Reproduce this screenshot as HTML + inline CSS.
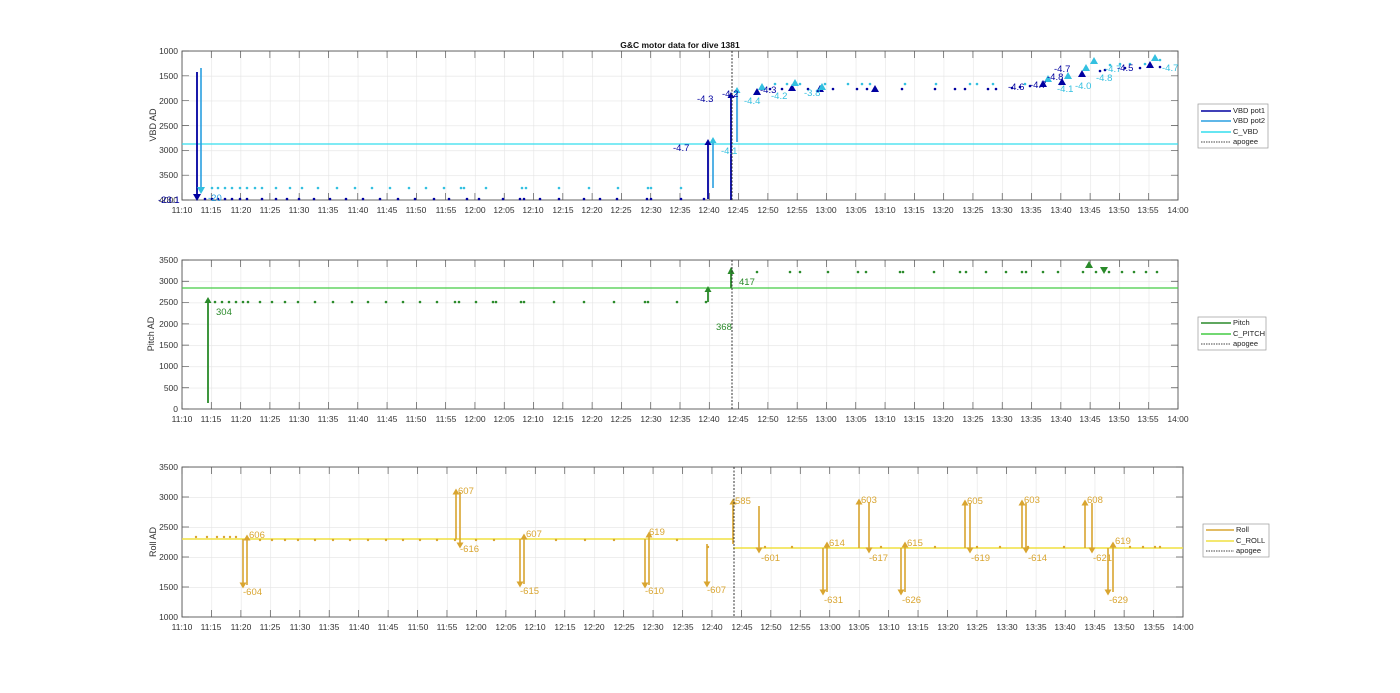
<!DOCTYPE html>
<html><head><meta charset="utf-8"><style>
html,body{margin:0;padding:0;background:#fff;}
svg{display:block;font-family:"Liberation Sans",Arial,sans-serif;}
.t{font-size:8.5px;fill:#333;}
.yl{font-size:9px;fill:#333;}
.lg{font-size:7.5px;fill:#222;}
</style></head><body>
<svg width="1400" height="693" viewBox="0 0 1400 693" xmlns="http://www.w3.org/2000/svg">
<defs>
<pattern id="g1" x="182" y="51" width="29.294" height="24.833" patternUnits="userSpaceOnUse"><path d="M0 0V24.833M0 0H29.294" stroke="#e4e4e4" stroke-width="1.2" fill="none"/></pattern>
<pattern id="g2" x="182" y="260" width="29.294" height="21.286" patternUnits="userSpaceOnUse"><path d="M0 0V21.286M0 0H29.294" stroke="#e4e4e4" stroke-width="1.2" fill="none"/></pattern>
<pattern id="g3" x="182" y="467" width="29.441" height="30" patternUnits="userSpaceOnUse"><path d="M0 0V30M0 0H29.441" stroke="#e4e4e4" stroke-width="1.2" fill="none"/></pattern>
</defs>
<rect width="1400" height="693" fill="#fff"/>
<!-- grids -->
<rect x="182" y="51" width="996" height="149" fill="url(#g1)"/>
<rect x="182" y="260" width="996" height="149" fill="url(#g2)"/>
<rect x="182" y="467" width="1001" height="150" fill="url(#g3)"/>
<!-- ticks -->
<g stroke="#555" stroke-width="7" fill="none">
<path d="M181.65 54.5H1179" stroke-dasharray="0.7 28.594"/>
<path d="M181.65 196.5H1179" stroke-dasharray="0.7 28.594"/>
<path d="M185.5 50.65V201" stroke-dasharray="0.7 24.133"/>
<path d="M1174.5 50.65V201" stroke-dasharray="0.7 24.133"/>
<path d="M181.65 263.5H1179" stroke-dasharray="0.7 28.594"/>
<path d="M181.65 405.5H1179" stroke-dasharray="0.7 28.594"/>
<path d="M185.5 259.65V410" stroke-dasharray="0.7 20.586"/>
<path d="M1174.5 259.65V410" stroke-dasharray="0.7 20.586"/>
<path d="M181.65 470.5H1184" stroke-dasharray="0.7 28.741"/>
<path d="M181.65 613.5H1184" stroke-dasharray="0.7 28.741"/>
<path d="M185.5 466.65V618" stroke-dasharray="0.7 29.3"/>
<path d="M1179.5 466.65V618" stroke-dasharray="0.7 29.3"/>
</g>
<g fill="none" stroke="#555" stroke-width="0.9">
<rect x="182" y="51" width="996" height="149"/>
<rect x="182" y="260" width="996" height="149"/>
<rect x="182" y="467" width="1001" height="150"/>
</g>

<!-- PLOT 1 data -->
<line x1="182" y1="144" x2="1178" y2="144" stroke="#33ddee" stroke-width="1.3"/>
<path fill="none" stroke="#33c0e0" stroke-width="2.6" stroke-linecap="round" d="M212 188h0M218 188h0M225 188h0M232 188h0M240 188h0M247 188h0M255 188h0M262 188h0M276 188h0M290 188h0M302 188h0M318 188h0M337 188h0M355 188h0M372 188h0M390 188h0M409 188h0M426 188h0M444 188h0M461 188h0M464 188h0M486 188h0M522 188h0M526 188h0M559 188h0M589 188h0M618 188h0M648 188h0M651 188h0M681 188h0M775 84h0M787 84h0M800 84h0M825 84h0M848 84h0M862 84h0M870 84h0M905 84h0M936 84h0M970 84h0M977 84h0M993 84h0M1025 84h0M1060 84h0M1110 65h0M1120 64h0M1130 64h0M1145 64h0M1160 60h0"/>
<path fill="none" stroke="#0000a0" stroke-width="2.6" stroke-linecap="round" d="M205 199h0M212 199h0M218 199h0M225 199h0M232 199h0M240 199h0M247 199h0M262 199h0M276 199h0M287 199h0M299 199h0M314 199h0M330 199h0M346 199h0M363 199h0M380 199h0M398 199h0M415 199h0M434 199h0M449 199h0M467 199h0M479 199h0M503 199h0M520 199h0M524 199h0M540 199h0M559 199h0M584 199h0M600 199h0M617 199h0M647 199h0M651 199h0M681 199h0M704 199h0M770 89h0M782 89h0M808 89h0M833 89h0M857 89h0M867 89h0M902 89h0M935 89h0M955 89h0M965 89h0M988 89h0M996 89h0M1012 88h0M1020 87h0M1030 86h0M1100 71h0M1105 70h0M1125 68h0M1140 68h0M1160 67h0"/>
<path fill="none" stroke="#0000a0" stroke-width="1.8" d="M197 72V197M708 199V145M731 200V98"/>
<path fill="none" stroke="#2a9fe0" stroke-width="1.6" d="M201 68V190M713 188V143M737 142V93"/>
<g fill="#0000a0">
<polygon points="197,201 193,194 201,194"/>
<polygon points="708,139 704.5,145 711.5,145"/>
<polygon points="731,92 727.5,98 734.5,98"/>
<polygon points="757,88 753,95 761,95"/><polygon points="792,84 788,91 796,91"/><polygon points="820,85 816,92 824,92"/><polygon points="875,85 871,92 879,92"/><polygon points="1043,80 1039,87 1047,87"/><polygon points="1062,78 1058,85 1066,85"/><polygon points="1082,70 1078,77 1086,77"/><polygon points="1150,61 1146,68 1154,68"/>
</g>
<g fill="#33c0e0">
<polygon points="201,194 197,187 205,187"/>
<polygon points="713,137 709.5,143 716.5,143"/>
<polygon points="737,87 733.5,93 740.5,93"/>
<polygon points="762,83 758,90 766,90"/><polygon points="795,79 791,86 799,86"/><polygon points="822,83 818,90 826,90"/><polygon points="1048,75 1044,82 1052,82"/><polygon points="1068,72 1064,79 1072,79"/><polygon points="1086,64 1082,71 1090,71"/><polygon points="1094,57 1090,64 1098,64"/><polygon points="1155,54 1151,61 1159,61"/>
</g>
<line x1="732" y1="51" x2="732" y2="200" stroke="#333" stroke-width="1" stroke-dasharray="2,1.5"/>

<!-- PLOT 2 data -->
<line x1="182" y1="288" x2="1178" y2="288" stroke="#44cc44" stroke-width="1.3"/>
<path fill="none" stroke="#2a8a2a" stroke-width="2.6" stroke-linecap="round" d="M215 302h0M222 302h0M229 302h0M236 302h0M243 302h0M248 302h0M260 302h0M272 302h0M285 302h0M298 302h0M315 302h0M333 302h0M352 302h0M368 302h0M386 302h0M403 302h0M420 302h0M437 302h0M455 302h0M459 302h0M476 302h0M493 302h0M496 302h0M521 302h0M524 302h0M554 302h0M584 302h0M614 302h0M645 302h0M648 302h0M677 302h0M706 302h0M757 272h0M790 272h0M800 272h0M828 272h0M858 272h0M866 272h0M900 272h0M903 272h0M934 272h0M960 272h0M966 272h0M986 272h0M1006 272h0M1022 272h0M1026 272h0M1043 272h0M1058 272h0M1083 272h0M1096 272h0M1109 272h0M1122 272h0M1134 272h0M1146 272h0M1157 272h0"/>
<path fill="none" stroke="#2a8a2a" stroke-width="1.8" d="M208 403V302M708 302V291M731 288V272"/>
<g fill="#2a8a2a">
<polygon points="208,297 204.5,303 211.5,303"/><polygon points="708,286 704.5,292 711.5,292"/><polygon points="731,267 727.5,274 734.5,274"/>
<polygon points="1089,261 1085,268 1093,268"/><polygon points="1104,274 1100,267 1108,267"/>
</g>
<line x1="732" y1="260" x2="732" y2="409" stroke="#333" stroke-width="1" stroke-dasharray="2,1.5"/>

<!-- PLOT 3 data -->
<path fill="none" stroke="#f0e040" stroke-width="1.5" d="M182 539H733M733 548H1183"/>
<path fill="none" stroke="#d9a530" stroke-width="2.4" stroke-linecap="round" d="M196 537h0M207 537h0M217 537h0M224 537h0M230 537h0M236 537h0M260 540h0M272 540h0M285 540h0M298 540h0M315 540h0M333 540h0M350 540h0M368 540h0M386 540h0M403 540h0M420 540h0M437 540h0M455 540h0M476 540h0M494 540h0M556 540h0M585 540h0M614 540h0M677 540h0M708 547h0M765 547h0M792 547h0M826 547h0M881 547h0M935 547h0M977 547h0M1000 547h0M1028 547h0M1064 547h0M1130 547h0M1143 547h0M1155 547h0M1160 547h0"/>
<path fill="none" stroke="#d9a530" stroke-width="1.6" d="M243 539V584M247 585V539M456 539V493M460 492V544M520 539V583M524 584V538M645 539V584M649 585V536M707 544V583M733 544V503M759 506V549M823 548V591M827 592V546M859 548V503M869 502V549M901 548V591M905 592V546M965 548V504M970 503V549M1022 548V504M1026 503V549M1085 548V504M1092 503V549M1108 548V591M1113 592V546"/>
<g fill="#d9a530">
<polygon points="243,588.5 239.5,582.5 246.5,582.5"/><polygon points="247,534.5 243.5,540.5 250.5,540.5"/>
<polygon points="456,488.5 452.5,494.5 459.5,494.5"/><polygon points="460,548.5 456.5,542.5 463.5,542.5"/>
<polygon points="520,587.5 516.5,581.5 523.5,581.5"/><polygon points="524,533.5 520.5,539.5 527.5,539.5"/>
<polygon points="645,588.5 641.5,582.5 648.5,582.5"/><polygon points="649,531.5 645.5,537.5 652.5,537.5"/>
<polygon points="707,587.5 703.5,581.5 710.5,581.5"/><polygon points="733,498.5 729.5,504.5 736.5,504.5"/>
<polygon points="759,553.5 755.5,547.5 762.5,547.5"/><polygon points="823,595.5 819.5,589.5 826.5,589.5"/>
<polygon points="827,541.5 823.5,547.5 830.5,547.5"/><polygon points="859,498.5 855.5,504.5 862.5,504.5"/>
<polygon points="869,553.5 865.5,547.5 872.5,547.5"/><polygon points="901,595.5 897.5,589.5 904.5,589.5"/>
<polygon points="905,541.5 901.5,547.5 908.5,547.5"/><polygon points="965,499.5 961.5,505.5 968.5,505.5"/>
<polygon points="970,553.5 966.5,547.5 973.5,547.5"/><polygon points="1022,499.5 1018.5,505.5 1025.5,505.5"/>
<polygon points="1026,553.5 1022.5,547.5 1029.5,547.5"/><polygon points="1085,499.5 1081.5,505.5 1088.5,505.5"/>
<polygon points="1092,553.5 1088.5,547.5 1095.5,547.5"/><polygon points="1108,595.5 1104.5,589.5 1111.5,589.5"/>
<polygon points="1113,541.5 1109.5,547.5 1116.5,547.5"/>
</g>
<line x1="734" y1="467" x2="734" y2="617" stroke="#333" stroke-width="1" stroke-dasharray="2,1.5"/>

<!-- title -->
<text x="680" y="48" text-anchor="middle" font-size="8.5" font-weight="bold" fill="#111">G&amp;C motor data for dive 1381</text>
<text class="yl" transform="translate(156,125) rotate(-90)" text-anchor="middle">VBD AD</text>
<text class="yl" transform="translate(154,334) rotate(-90)" text-anchor="middle">Pitch AD</text>
<text class="yl" transform="translate(156,542) rotate(-90)" text-anchor="middle">Roll AD</text>
<g class="t" text-anchor="end">
<text x="178" y="54">1000</text><text x="178" y="79">1500</text><text x="178" y="104">2000</text><text x="178" y="129">2500</text><text x="178" y="153">3000</text><text x="178" y="178">3500</text><text x="178" y="203">4000</text>
<text x="178" y="263">3500</text><text x="178" y="284">3000</text><text x="178" y="305">2500</text><text x="178" y="327">2000</text><text x="178" y="348">1500</text><text x="178" y="369">1000</text><text x="178" y="391">500</text><text x="178" y="412">0</text>
<text x="178" y="470">3500</text><text x="178" y="500">3000</text><text x="178" y="530">2500</text><text x="178" y="560">2000</text><text x="178" y="590">1500</text><text x="178" y="620">1000</text>
</g>
<g class="t" text-anchor="middle">
<text x="182" y="213">11:10</text><text x="211" y="213">11:15</text><text x="241" y="213">11:20</text><text x="270" y="213">11:25</text><text x="299" y="213">11:30</text><text x="328" y="213">11:35</text><text x="358" y="213">11:40</text><text x="387" y="213">11:45</text><text x="416" y="213">11:50</text><text x="446" y="213">11:55</text><text x="475" y="213">12:00</text><text x="504" y="213">12:05</text><text x="533" y="213">12:10</text><text x="563" y="213">12:15</text><text x="592" y="213">12:20</text><text x="621" y="213">12:25</text><text x="651" y="213">12:30</text><text x="680" y="213">12:35</text><text x="709" y="213">12:40</text><text x="738" y="213">12:45</text><text x="768" y="213">12:50</text><text x="797" y="213">12:55</text><text x="826" y="213">13:00</text><text x="856" y="213">13:05</text><text x="885" y="213">13:10</text><text x="914" y="213">13:15</text><text x="943" y="213">13:20</text><text x="973" y="213">13:25</text><text x="1002" y="213">13:30</text><text x="1031" y="213">13:35</text><text x="1061" y="213">13:40</text><text x="1090" y="213">13:45</text><text x="1119" y="213">13:50</text><text x="1148" y="213">13:55</text><text x="1178" y="213">14:00</text>
</g>
<g class="t" text-anchor="middle" transform="translate(0,209)">
<text x="182" y="213">11:10</text><text x="211" y="213">11:15</text><text x="241" y="213">11:20</text><text x="270" y="213">11:25</text><text x="299" y="213">11:30</text><text x="328" y="213">11:35</text><text x="358" y="213">11:40</text><text x="387" y="213">11:45</text><text x="416" y="213">11:50</text><text x="446" y="213">11:55</text><text x="475" y="213">12:00</text><text x="504" y="213">12:05</text><text x="533" y="213">12:10</text><text x="563" y="213">12:15</text><text x="592" y="213">12:20</text><text x="621" y="213">12:25</text><text x="651" y="213">12:30</text><text x="680" y="213">12:35</text><text x="709" y="213">12:40</text><text x="738" y="213">12:45</text><text x="768" y="213">12:50</text><text x="797" y="213">12:55</text><text x="826" y="213">13:00</text><text x="856" y="213">13:05</text><text x="885" y="213">13:10</text><text x="914" y="213">13:15</text><text x="943" y="213">13:20</text><text x="973" y="213">13:25</text><text x="1002" y="213">13:30</text><text x="1031" y="213">13:35</text><text x="1061" y="213">13:40</text><text x="1090" y="213">13:45</text><text x="1119" y="213">13:50</text><text x="1148" y="213">13:55</text><text x="1178" y="213">14:00</text>
</g>
<g class="t" text-anchor="middle">
<text x="182" y="630">11:10</text><text x="211" y="630">11:15</text><text x="241" y="630">11:20</text><text x="270" y="630">11:25</text><text x="300" y="630">11:30</text><text x="329" y="630">11:35</text><text x="359" y="630">11:40</text><text x="388" y="630">11:45</text><text x="418" y="630">11:50</text><text x="447" y="630">11:55</text><text x="476" y="630">12:00</text><text x="506" y="630">12:05</text><text x="535" y="630">12:10</text><text x="565" y="630">12:15</text><text x="594" y="630">12:20</text><text x="624" y="630">12:25</text><text x="653" y="630">12:30</text><text x="683" y="630">12:35</text><text x="712" y="630">12:40</text><text x="742" y="630">12:45</text><text x="771" y="630">12:50</text><text x="800" y="630">12:55</text><text x="830" y="630">13:00</text><text x="859" y="630">13:05</text><text x="889" y="630">13:10</text><text x="918" y="630">13:15</text><text x="948" y="630">13:20</text><text x="977" y="630">13:25</text><text x="1007" y="630">13:30</text><text x="1036" y="630">13:35</text><text x="1065" y="630">13:40</text><text x="1095" y="630">13:45</text><text x="1124" y="630">13:50</text><text x="1154" y="630">13:55</text><text x="1183" y="630">14:00</text>
</g>
<g font-size="9.5">
<text x="158" y="203" fill="#0000a0">-23.1</text><text x="208" y="201" fill="#2a9fe0">-20</text>
<text x="673" y="151" fill="#0000a0">-4.7</text><text x="697" y="102" fill="#0000a0">-4.3</text><text x="722" y="97" fill="#0000a0">-4.2</text>
<text x="721" y="154" fill="#33c0e0">-4.1</text><text x="744" y="104" fill="#33c0e0">-4.4</text>
<text x="760" y="93" fill="#0000a0">-4.3</text><text x="771" y="99" fill="#33c0e0">-4.2</text><text x="804" y="96" fill="#33c0e0">-3.8</text>
<text x="1008" y="90" fill="#0000a0">-4.6</text><text x="1030" y="88" fill="#0000a0">-4.7</text><text x="1047" y="80" fill="#0000a0">-4.8</text><text x="1054" y="72" fill="#0000a0">-4.7</text>
<text x="1057" y="92" fill="#33c0e0">-4.1</text><text x="1075" y="89" fill="#33c0e0">-4.0</text><text x="1096" y="81" fill="#33c0e0">-4.8</text><text x="1105" y="72" fill="#33c0e0">-4.7</text>
<text x="1117" y="71" fill="#0000a0">-4.5</text><text x="1162" y="71" fill="#33c0e0">-4.7</text>
</g>
<g font-size="9.5" fill="#2a8a2a"><text x="216" y="315">304</text><text x="716" y="330">368</text><text x="739" y="285">417</text></g>
<g font-size="9.5" fill="#d9a530">
<text x="243" y="595">-604</text><text x="249" y="538">606</text><text x="458" y="494">607</text><text x="460" y="552">-616</text>
<text x="520" y="594">-615</text><text x="526" y="537">607</text><text x="645" y="594">-610</text><text x="649" y="535">619</text>
<text x="707" y="593">-607</text><text x="735" y="504">585</text><text x="761" y="561">-601</text><text x="824" y="603">-631</text>
<text x="829" y="546">614</text><text x="861" y="503">603</text><text x="869" y="561">-617</text><text x="902" y="603">-626</text>
<text x="907" y="546">615</text><text x="967" y="504">605</text><text x="971" y="561">-619</text><text x="1024" y="503">603</text>
<text x="1028" y="561">-614</text><text x="1087" y="503">608</text><text x="1093" y="561">-621</text><text x="1109" y="603">-629</text><text x="1115" y="544">619</text>
</g>
<g>
<rect x="1198" y="104" width="70" height="44" fill="#fff" stroke="#999" stroke-width="0.7"/>
<line x1="1201" y1="111" x2="1231" y2="111" stroke="#0000a0" stroke-width="1.5"/><text class="lg" x="1233" y="113">VBD pot1</text>
<line x1="1201" y1="121" x2="1231" y2="121" stroke="#2a9fe0" stroke-width="1.5"/><text class="lg" x="1233" y="123">VBD pot2</text>
<line x1="1201" y1="132" x2="1231" y2="132" stroke="#33ddee" stroke-width="1.5"/><text class="lg" x="1233" y="134">C_VBD</text>
<line x1="1201" y1="142" x2="1231" y2="142" stroke="#444" stroke-dasharray="1.5,1"/><text class="lg" x="1233" y="144">apogee</text>
<rect x="1198" y="317" width="68" height="33" fill="#fff" stroke="#999" stroke-width="0.7"/>
<line x1="1201" y1="323" x2="1231" y2="323" stroke="#2a8a2a" stroke-width="1.5"/><text class="lg" x="1233" y="325">Pitch</text>
<line x1="1201" y1="334" x2="1231" y2="334" stroke="#44cc44" stroke-width="1.5"/><text class="lg" x="1233" y="336">C_PITCH</text>
<line x1="1201" y1="344" x2="1231" y2="344" stroke="#444" stroke-dasharray="1.5,1"/><text class="lg" x="1233" y="346">apogee</text>
<rect x="1203" y="524" width="66" height="33" fill="#fff" stroke="#999" stroke-width="0.7"/>
<line x1="1206" y1="530" x2="1234" y2="530" stroke="#d9a530" stroke-width="1.5"/><text class="lg" x="1236" y="532">Roll</text>
<line x1="1206" y1="541" x2="1234" y2="541" stroke="#f0e040" stroke-width="1.5"/><text class="lg" x="1236" y="543">C_ROLL</text>
<line x1="1206" y1="551" x2="1234" y2="551" stroke="#444" stroke-dasharray="1.5,1"/><text class="lg" x="1236" y="553">apogee</text>
</g>
</svg>
</body></html>
